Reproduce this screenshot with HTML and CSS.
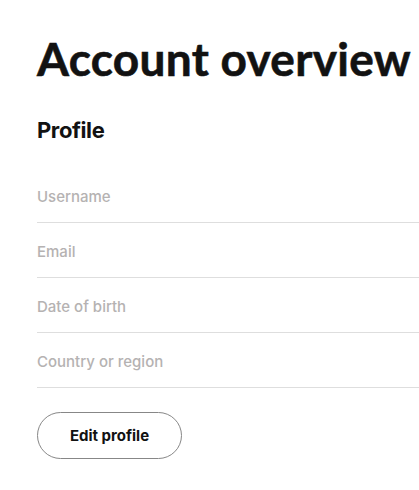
FILE: index.html
```html
<!DOCTYPE html>
<html lang="en">
<head>
<meta charset="utf-8">
<title>Account overview</title>
<link rel="stylesheet" href="styles.css">
</head>
<body>
<main class="page">
  <h1 class="title">Account overview</h1>
  <h2 class="section-title">Profile</h2>
  <div class="fields">
    <div class="field"><span class="label">Username</span></div>
    <div class="field"><span class="label">Email</span></div>
    <div class="field"><span class="label">Date of birth</span></div>
    <div class="field"><span class="label">Country or region</span></div>
  </div>
  <button class="edit-btn" type="button">Edit profile</button>
</main>
</body>
</html>
```
FILE: styles.css
```css
html, body {
  margin: 0;
  padding: 0;
  background: #ffffff;
}
body {
  font-family: Inter, "Noto Sans", "Liberation Sans", sans-serif;
  color: #121212;
  overflow: hidden;
}
.page {
  padding: 31px 0 0 37px;
}
.title {
  margin: 0;
  font-family: Lato, Inter, "Liberation Sans", sans-serif;
  font-size: 46px;
  line-height: 56px;
  font-weight: 700;
  letter-spacing: 0.3px;
  white-space: nowrap;
  -webkit-text-stroke: 0.6px #121212;
}
.section-title {
  margin: 29px 0 0;
  font-size: 22px;
  line-height: 28px;
  font-weight: 700;
  letter-spacing: -0.4px;
}
.fields {
  margin-top: 24px;
  display: flex;
  flex-direction: column;
}
.field {
  padding: 19px 0 15px;
  border-bottom: 1px solid #dedede;
}
.label {
  display: block;
  font-size: 15px;
  line-height: 20px;
  color: #b5b2b2;
  font-weight: 500;
}
.edit-btn {
  margin-top: 24px;
  width: 145px;
  height: 47px;
  border: 1px solid #878787;
  border-radius: 24px;
  background: #ffffff;
  font-family: inherit;
  font-size: 15px;
  font-weight: 700;
  color: #121212;
  cursor: pointer;
}
```
